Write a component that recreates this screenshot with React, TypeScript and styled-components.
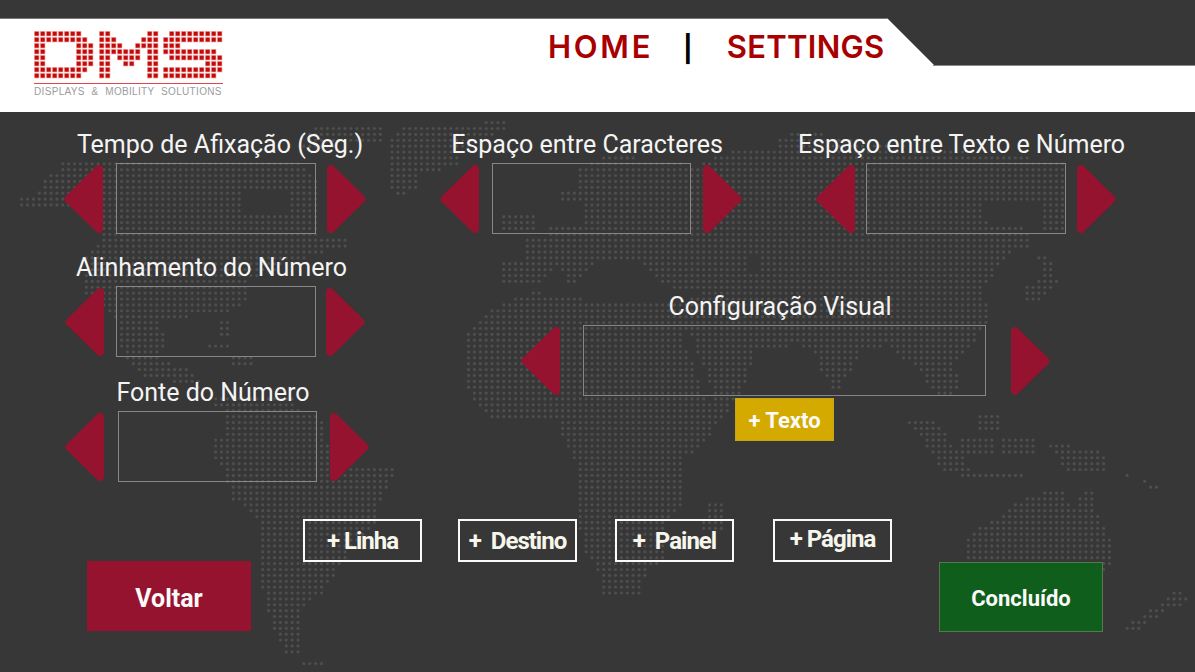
import React from 'react';
import styled, { createGlobalStyle } from 'styled-components';

const GlobalStyle = createGlobalStyle`
  html, body {
    margin: 0;
    padding: 0;
    background: #373737;
  }
  * {
    box-sizing: border-box;
  }
`;

const Page = styled.div`
  position: relative;
  width: 1195px;
  height: 672px;
  overflow: hidden;
  background: #373737;
  font-family: Roboto, 'Liberation Sans', sans-serif;
`;

const MapLayer = styled.svg`
  position: absolute;
  top: 0;
  left: 0;
  z-index: 0;
`;

const Header = styled.header`
  position: relative;
  z-index: 1;
  display: flex;
  align-items: flex-start;
  margin-top: 18px;
  height: 94px;
  padding: 12px 0 0 34px;
  background: #fff;
  border-top: 1px solid #777;
  clip-path: polygon(0 0, 887px 0, 934px 47px, 100% 47px, 100% 100%, 0 100%);
`;

const NotchLine = styled.div`
  position: absolute;
  top: 46px;
  right: 0;
  width: 262px;
  height: 1px;
  background: #8a8a8a;
`;

const Logo = styled.div`
  display: flex;
  flex-direction: column;
  width: 189px;
`;

const LogoRule = styled.div`
  height: 1px;
  margin-top: 4px;
  background: #e04848;
`;

const LogoText = styled.div`
  margin-top: 2px;
  font-family: 'Liberation Sans', Arial, sans-serif;
  font-size: 10px;
  line-height: 12px;
  letter-spacing: 0.33px;
  word-spacing: 3.6px;
  white-space: nowrap;
  color: #9c9c9c;
`;

const Nav = styled.nav`
  display: flex;
  align-items: center;
  margin-left: 325px;
  margin-top: -3px;
  height: 36px;
  font-family: Inter, 'Open Sans', sans-serif;
  font-size: 31px;
  font-weight: 600;
  color: #a80000;
`;

const NavLink = styled.span<{ $spacing: number }>`
  letter-spacing: ${(p) => p.$spacing}px;
  white-space: nowrap;
`;

const NavDivider = styled.span`
  margin: 4px 34px 0 30px;
  font-size: 26px;
  font-weight: 700;
  color: #000;
`;

const Main = styled.main`
  position: relative;
  z-index: 1;
  display: flex;
  flex-direction: column;
  padding: 17px 0 0 64px;
`;

const TopRow = styled.div`
  display: flex;
  gap: 74px;
`;

const MiddleRow = styled.div`
  display: flex;
  margin-top: 18px;
`;

const LeftColumn = styled.div`
  display: flex;
  flex-direction: column;
  gap: 20px;
  width: 305px;
  padding-left: 1px;
`;

const ConfigColumn = styled.div`
  display: flex;
  flex-direction: column;
  align-items: center;
  margin: 39px 0 0 152px;
`;

const Field = styled.section<{ $width: number }>`
  display: flex;
  flex-direction: column;
  align-items: center;
  width: ${(p) => p.$width}px;
`;

const Title = styled.h2<{ $shift: number }>`
  margin: 1px 0 3px ${(p) => p.$shift * 2}px;
  height: 30px;
  font-size: 25px;
  font-weight: 400;
  line-height: 30px;
  white-space: nowrap;
  color: #f4f4f4;
`;

const StepRow = styled.div`
  display: flex;
  align-items: center;
  justify-content: space-between;
  width: 100%;
`;

const ValueBox = styled.div<{ $width?: number; $nudge?: number }>`
  width: ${(p) => p.$width ?? 200}px;
  height: 71px;
  margin-left: ${(p) => p.$nudge ?? 0}px;
  border: 1px solid #878787;
`;

const ArrowIcon = styled.svg<{ $flip?: boolean }>`
  display: block;
  flex: none;
  width: 39px;
  height: 70px;
  transform: ${(p) => (p.$flip ? 'scaleX(-1)' : 'none')};
`;

const TextButton = styled.button`
  align-self: center;
  width: 99px;
  height: 43px;
  margin: 2px 2px 0 0;
  padding: 2px 0 0;
  border: 1px solid #c6a41c;
  background: #d4aa00;
  color: #fafafa;
  font-family: inherit;
  font-size: 22px;
  font-weight: 700;
`;

const AddRow = styled.div`
  display: flex;
  margin: 37px 0 0 239px;
`;

const AddButton = styled.button<{ $before?: number; $raised?: boolean }>`
  width: 119px;
  height: 43px;
  margin-left: ${(p) => p.$before ?? 0}px;
  padding: 0 0 ${(p) => (p.$raised ? 4 : 0)}px;
  border: 2px solid #fafafa;
  background: transparent;
  color: #f6f6ec;
  font-family: inherit;
  font-size: 24px;
  font-weight: 700;
  letter-spacing: -1px;
  white-space: pre;
`;

const BottomRow = styled.div`
  display: flex;
  align-items: flex-start;
  justify-content: space-between;
  margin: -1px 92px 0 23px;
`;

const ActionButton = styled.button<{ $tone: 'back' | 'done' }>`
  width: 164px;
  height: 70px;
  margin-top: ${(p) => (p.$tone === 'done' ? 1 : 0)}px;
  padding: ${(p) => (p.$tone === 'done' ? 3 : 4)}px 0 0;
  border: 1px solid ${(p) => (p.$tone === 'done' ? '#56784a' : '#96132f')};
  background: ${(p) => (p.$tone === 'done' ? '#0f5e1b' : '#96132f')};
  color: #fafafa;
  font-family: inherit;
  font-size: ${(p) => (p.$tone === 'done' ? 22 : 25)}px;
  font-weight: 700;
`;

/* world map: dots on a fixed grid, kept where they fall on land */
const LAND: number[][][] = [
  [[10,214],[22,198],[42,192],[44,176],[58,172],[58,160],[295,160],[318,178],[320,235],[345,235],[348,246],[318,253],[300,262],[250,280],[250,296],[228,315],[160,318],[165,345],[158,362],[190,366],[205,392],[190,385],[140,375],[122,352],[115,318],[83,295],[83,262],[100,240],[100,215],[60,205],[25,205]],
  [[315,124],[385,124],[385,142],[345,140],[330,150],[300,150]],
  [[218,318],[228,318],[228,338],[218,338]],
  [[207,346],[233,346],[233,351],[207,351]],
  [[228,356],[255,356],[255,366],[228,366]],
  [[387,150],[400,125],[507,122],[505,130],[460,150],[457,165],[420,175],[415,192],[400,195],[387,190]],
  [[503,215],[537,215],[537,230],[503,230]],
  [[600,157],[632,157],[695,165],[730,152],[775,148],[780,138],[800,130],[860,140],[940,150],[1000,155],[1030,158],[1065,160],[1067,228],[1030,233],[1028,250],[1012,250],[998,268],[985,285],[985,300],[990,318],[970,350],[955,362],[960,392],[935,395],[920,370],[897,355],[885,345],[860,352],[850,375],[835,393],[820,370],[813,350],[795,345],[757,350],[740,395],[727,412],[707,412],[690,350],[680,305],[700,292],[660,285],[640,262],[600,262],[570,285],[555,262],[543,285],[503,285],[500,262],[540,258],[523,258],[523,240],[545,238],[545,225],[585,225],[585,200],[557,200],[557,188],[580,188],[580,168]],
  [[463,340],[473,328],[493,308],[533,292],[575,296],[600,303],[680,303],[690,340],[708,405],[727,412],[707,440],[683,460],[683,490],[684,505],[668,520],[668,557],[647,570],[640,597],[598,597],[598,570],[586,555],[576,518],[580,487],[575,460],[563,440],[560,420],[530,418],[493,420],[480,410],[468,390],[463,365]],
  [[707,503],[727,503],[722,530],[702,530]],
  [[1033,255],[1048,255],[1055,272],[1058,282],[1040,300],[1022,300],[1022,290],[1045,272]],
  [[907,420],[935,420],[972,470],[945,473]],
  [[962,435],[993,435],[993,453],[962,453]],
  [[1003,435],[1035,435],[1035,455],[1003,455]],
  [[962,472],[1025,472],[1025,478],[962,478]],
  [[975,412],[998,412],[998,432],[975,432]],
  [[1047,445],[1065,445],[1107,453],[1108,470],[1160,485],[1155,490],[1120,470],[1070,475]],
  [[1047,491],[1062,491],[1075,508],[1083,491],[1093,491],[1098,515],[1112,540],[1113,565],[1103,575],[1085,575],[1065,560],[1030,565],[968,575],[968,535],[998,518],[1015,503]],
  [[1172,588],[1182,588],[1188,602],[1165,612],[1140,628],[1125,635],[1122,628],[1150,610],[1165,598]],
  [[200,397],[293,397],[300,413],[320,413],[327,440],[330,462],[393,468],[393,478],[380,500],[377,522],[347,555],[333,578],[320,595],[303,610],[298,630],[303,645],[298,655],[285,655],[275,630],[267,607],[260,575],[260,520],[230,497],[223,470],[213,460],[213,440],[227,433],[227,413]],
  [[302,660],[322,660],[322,668],[302,668]],
];

const WATER: number[][][] = [
  [[240,190],[292,190],[292,212],[240,212]],
  [[985,200],[1040,200],[1042,235],[1015,225],[985,222]],
  [[680,330],[690,330],[715,400],[705,400]],
  [[745,255],[760,255],[760,275],[745,275]],
];

const inside = (x: number, y: number, poly: number[][]) => {
  let hit = false;
  for (let i = 0, j = poly.length - 1; i < poly.length; j = i++) {
    const [xi, yi] = poly[i];
    const [xj, yj] = poly[j];
    if (yi > y !== yj > y && x < ((xj - xi) * (y - yi)) / (yj - yi) + xi) hit = !hit;
  }
  return hit;
};

const PITCH = 5.88;
const dots: [number, number][] = [];
for (let row = 0; row < 115; row++) {
  for (let col = 0; col < 204; col++) {
    const x = 4 + col * PITCH;
    const y = 5 + row * PITCH;
    if (LAND.some((p) => inside(x, y, p)) && !WATER.some((p) => inside(x, y, p))) {
      dots.push([x, y]);
    }
  }
}

const WorldMap = () => (
  <MapLayer width={1195} height={672} viewBox="0 0 1195 672">
    <g fill="#4e4e4e">
      {dots.map(([x, y]) => (
        <circle key={`${x}-${y}`} cx={x} cy={y} r={1.6} />
      ))}
    </g>
  </MapLayer>
);

const LETTERS: { x: number; rows: string[] }[] = [
  {
    x: 0,
    rows: ['11111111..', '111111111.', '11.....111', '11.....111', '11.....111', '11.....111', '111111111.', '11111111..'],
  },
  {
    x: 65,
    rows: ['11......11', '111....111', '1111..1111', '1111111.11', '11.1111.11', '11..11..11', '11......11', '11......11'],
  },
  {
    x: 129,
    rows: ['.111111111', '1111111111', '111.......', '111111111.', '.111111111', '.......111', '1111111111', '111111111.'],
  },
];

const LogoMark = () => (
  <svg width={189} height={48} viewBox="0 0 189 48">
    {LETTERS.map((letter) =>
      letter.rows.map((row, r) =>
        row.split('').map((cell, c) =>
          cell === '1' ? (
            <g key={`${letter.x}-${r}-${c}`}>
              <rect x={letter.x + c * 6} y={r * 6} width={5.4} height={5.4} fill="#f3bcbc" />
              <rect x={letter.x + c * 6 + 0.7} y={r * 6 + 0.7} width={4} height={4} fill="#c30a0a" />
            </g>
          ) : null
        )
      )
    )}
  </svg>
);

const Arrow = ({ right }: { right?: boolean }) => (
  <ArrowIcon $flip={right} viewBox="0 0 39 70">
    <polygon
      points="35,5 4.5,35 35,65"
      fill="#96132f"
      stroke="#96132f"
      strokeWidth={8}
      strokeLinejoin="round"
    />
  </ArrowIcon>
);

type StepperProps = {
  title: string;
  width: number;
  shift: number;
  boxWidth?: number;
  boxNudge?: number;
};

const Stepper = ({ title, width, shift, boxWidth, boxNudge }: StepperProps) => (
  <Field $width={width}>
    <Title $shift={shift}>{title}</Title>
    <StepRow>
      <Arrow />
      <ValueBox $width={boxWidth} $nudge={boxNudge} />
      <Arrow right />
    </StepRow>
  </Field>
);

const App = () => (
  <Page>
    <GlobalStyle />
    <WorldMap />
    <Header>
      <NotchLine />
      <Logo>
        <LogoMark />
        <LogoRule />
        <LogoText>DISPLAYS &amp; MOBILITY SOLUTIONS</LogoText>
      </Logo>
      <Nav>
        <NavLink $spacing={2.7}>HOME</NavLink>
        <NavDivider>|</NavDivider>
        <NavLink $spacing={0.3}>SETTINGS</NavLink>
      </Nav>
    </Header>
    <Main>
      <TopRow>
        <Stepper title="Tempo de Afixação (Seg.)" width={302} shift={5} boxNudge={2} />
        <Stepper title="Espaço entre Caracteres" width={302} shift={-4} boxWidth={199} boxNudge={1} />
        <Stepper title="Espaço entre Texto e Número" width={300} shift={-4.5} />
      </TopRow>
      <MiddleRow>
        <LeftColumn>
          <Stepper title="Alinhamento do Número" width={300} shift={-3.5} boxNudge={2} />
          <Stepper title="Fonte do Número" width={304} shift={-4} boxWidth={199} />
        </LeftColumn>
        <ConfigColumn>
          <Stepper title="Configuração Visual" width={529} shift={-5.5} boxWidth={403} boxNudge={-2} />
          <TextButton>+ Texto</TextButton>
        </ConfigColumn>
      </MiddleRow>
      <AddRow>
        <AddButton>+ Linha</AddButton>
        <AddButton $before={36}>{'+  Destino'}</AddButton>
        <AddButton $before={38}>{'+  Painel'}</AddButton>
        <AddButton $before={39} $raised>
          + Página
        </AddButton>
      </AddRow>
      <BottomRow>
        <ActionButton $tone="back">Voltar</ActionButton>
        <ActionButton $tone="done">Concluído</ActionButton>
      </BottomRow>
    </Main>
  </Page>
);

export default App;
